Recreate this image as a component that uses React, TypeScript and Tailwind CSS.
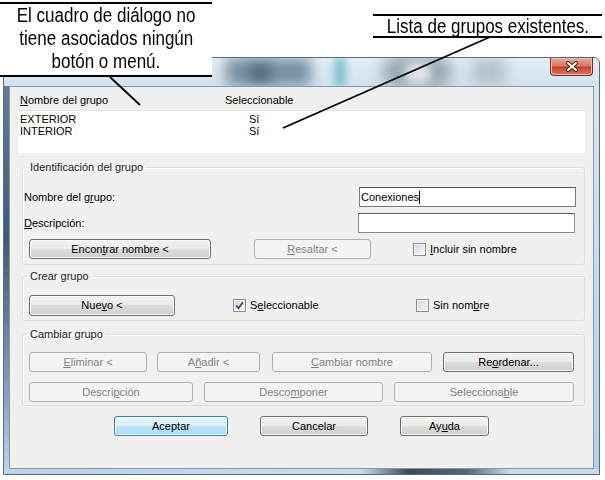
import type { ReactNode } from 'react';

type BtnProps = {
    className: string;
    children: ReactNode;
    disabled?: boolean;
    primary?: boolean;
};

function Btn({ className, children, disabled, primary }: BtnProps) {
    const look = disabled
        ? 'border-[#adb2b5] bg-[#f4f4f4] text-[#838383]'
        : primary
          ? 'border-[#3c7fb1] bg-[linear-gradient(#eaf6fd_0%,#d9f0fc_50%,#bee6fd_50%,#a7d9f5_100%)] text-black shadow-[inset_0_0_0_1px_#f4fbff]'
          : 'border-[#707070] bg-[linear-gradient(#f2f2f2_0%,#ebebeb_50%,#dddddd_50%,#cfcfcf_100%)] text-black shadow-[inset_0_0_0_1px_#fbfbfb]';
    return (
        <button
            type="button"
            className={`flex shrink-0 items-center justify-center rounded-[3px] border text-[11px] leading-none ${look} ${className}`}
        >
            {children}
        </button>
    );
}

function Check({ checked }: { checked?: boolean }) {
    return (
        <span className="flex h-[13px] w-[13px] shrink-0 items-center justify-center border border-[#8e8f8f] bg-[linear-gradient(135deg,#d6d6d6,#f8f8f8)] shadow-[inset_0_0_0_1px_#f4f4f4]">
            {checked && (
                <svg width="9" height="9" viewBox="0 0 9 9">
                    <path d="M1.2 4.6 L3.6 7.2 L7.9 1.2" stroke="#31457d" strokeWidth="1.7" fill="none" />
                </svg>
            )}
        </span>
    );
}

// mnemonic letter
function U({ children }: { children: ReactNode }) {
    return <span className="underline underline-offset-1">{children}</span>;
}

function Group({ title, className, children }: { title: string; className: string; children: ReactNode }) {
    return (
        <fieldset
            className={`ml-[12px] w-[563px] rounded-[3px] border border-[#d5dfe5] shadow-[inset_1px_1px_0_#ffffff] ${className}`}
        >
            <legend className="ml-[4px] px-[3px] text-[11px] leading-[14px] text-[#1e1e1e]">{title}</legend>
            {children}
        </fieldset>
    );
}

export default function App() {
    return (
        <div className="relative h-[480px] w-[605px] overflow-hidden bg-white font-['Liberation_Sans',Arial,sans-serif] text-black">
            {/* Window */}
            <div className="ml-[3px] mt-[57px] flex h-[418px] w-[597px] flex-col overflow-hidden rounded-t-[6px] border border-[#5b6b79] bg-[#c4d8ea]">
                {/* Title bar (blurred glass) */}
                <div className="relative flex h-[28px] shrink-0 justify-end overflow-hidden bg-[linear-gradient(#e4eef6,#d2e2ef)] pr-[6px]">
                    <div className="absolute left-[222px] top-[0px] h-[28px] w-[85px] bg-[#7890a2] blur-[7px]" />
                    <div className="absolute left-[245px] top-[6px] h-[18px] w-[22px] bg-[#566c7c] blur-[6px]" />
                    <div className="absolute left-[330px] top-[0px] h-[28px] w-[12px] bg-[#7cc0d0] blur-[4px]" />
                    <div className="absolute left-[378px] top-[-2px] h-[32px] w-[70px] rounded-full bg-[#95a3ad] blur-[8px]" />
                    <div className="absolute left-[400px] top-[4px] h-[22px] w-[28px] rounded-full bg-[#e0e5ea] blur-[5px]" />
                    <div className="absolute left-[468px] top-[0px] h-[28px] w-[34px] bg-[#b5c2cd] blur-[7px]" />
                    <div className="relative flex h-[18px] w-[43px] items-center justify-center rounded-b-[4px] border border-t-0 border-[#7a2a1e] bg-[linear-gradient(#e8ab9d_0%,#d77a66_45%,#c2432d_55%,#d37a63_100%)] shadow-[inset_0_0_0_1px_#f1b9ad]">
                        <svg width="14" height="11" viewBox="0 0 14 11">
                            <path d="M3 2 L11 9 M11 2 L3 9" stroke="#4a1d16" strokeWidth="4" strokeLinecap="round" />
                            <path d="M3 2 L11 9 M11 2 L3 9" stroke="#ffffff" strokeWidth="2" strokeLinecap="round" />
                        </svg>
                    </div>
                </div>

                <div className="flex flex-1">
                    <div className="w-[5px] bg-[linear-gradient(#5f7f99,#3a5c78_40%,#7fa3c1_80%,#b9d3e8)]" />

                    {/* Client area */}
                    <div className="flex w-[585px] flex-col border border-[#8797a5] bg-[#f0f0f0]">
                        {/* Group list */}
                        <div className="ml-[8px] mt-[3px] w-[567px]">
                            <div className="flex h-[21px] items-center border-b border-[#e3e3e3] text-[11px]">
                                <span className="ml-[2px] w-[205px]">
                                    <U>N</U>ombre del grupo
                                </span>
                                <span>Seleccionable</span>
                            </div>
                            <div className="h-[42px] bg-white pt-[2px] text-[11px] leading-[12px]">
                                <div className="flex">
                                    <span className="ml-[2px] w-[229px]">EXTERIOR</span>
                                    <span>Sí</span>
                                </div>
                                <div className="flex">
                                    <span className="ml-[2px] w-[229px]">INTERIOR</span>
                                    <span>Sí</span>
                                </div>
                            </div>
                        </div>

                        <Group title="Identificación del grupo" className="mt-[7px] pb-[5px]">
                            <div className="mt-[13px] flex h-[20px] items-center text-[11px]">
                                <span className="ml-[1px]">
                                    Nombre del g<U>r</U>upo:
                                </span>
                                <div className="ml-auto mr-[8px] flex h-[20px] w-[217px] items-center border border-[#7a7a7a] border-t-[#555555] bg-white pl-[1px]">
                                    Conexiones
                                    <span className="h-[13px] w-px bg-black" />
                                </div>
                            </div>
                            <div className="mt-[6px] flex h-[20px] items-center text-[11px]">
                                <span className="ml-[1px]">
                                    <U>D</U>escripción:
                                </span>
                                <div className="ml-auto mr-[9px] h-[20px] w-[217px] border border-[#8a8a8a] border-t-[#5c5c5c] bg-white" />
                            </div>
                            <div className="mt-[6px] flex h-[20px] items-center text-[11px]">
                                <Btn className="ml-[6px] h-[20px] w-[182px]">
                                    Encon<U>t</U>rar nombre &lt;
                                </Btn>
                                <Btn className="ml-[43px] h-[20px] w-[117px]" disabled>
                                    <U>R</U>esaltar &lt;
                                </Btn>
                                <span className="ml-[42px]">
                                    <Check />
                                </span>
                                <span className="ml-[4px]">
                                    <U>I</U>ncluir sin nombre
                                </span>
                            </div>
                        </Group>

                        <Group title="Crear grupo" className="mt-[4px] pb-[4px]">
                            <div className="mt-[12px] flex h-[21px] items-center text-[11px]">
                                <Btn className="ml-[6px] h-[21px] w-[146px]">
                                    Nue<U>v</U>o &lt;
                                </Btn>
                                <div className="ml-[58px] flex w-[183px] items-center">
                                    <Check checked />
                                    <span className="ml-[4px]">
                                        S<U>e</U>leccionable
                                    </span>
                                </div>
                                <Check />
                                <span className="ml-[4px]">
                                    Sin nom<U>b</U>re
                                </span>
                            </div>
                        </Group>

                        <Group title="Cambiar grupo" className="mt-[6px] pb-[3px]">
                            <div className="mt-[11px] flex h-[20px] items-center">
                                <Btn className="ml-[6px] h-[20px] w-[118px]" disabled>
                                    <U>E</U>liminar &lt;
                                </Btn>
                                <Btn className="ml-[10px] h-[20px] w-[103px]" disabled>
                                    A<U>ñ</U>adir &lt;
                                </Btn>
                                <Btn className="ml-[12px] h-[20px] w-[160px]" disabled>
                                    <U>C</U>ambiar nombre
                                </Btn>
                                <Btn className="ml-[11px] h-[20px] w-[131px]">
                                    Re<U>o</U>rdenar...
                                </Btn>
                            </div>
                            <div className="mt-[10px] flex h-[20px] items-center">
                                <Btn className="ml-[6px] h-[20px] w-[164px]" disabled>
                                    Descri<U>p</U>ción
                                </Btn>
                                <Btn className="ml-[11px] h-[20px] w-[179px]" disabled>
                                    Desco<U>m</U>poner
                                </Btn>
                                <Btn className="ml-[11px] h-[20px] w-[180px]" disabled>
                                    Selecciona<U>b</U>le
                                </Btn>
                            </div>
                        </Group>

                        <div className="ml-[104px] mt-[10px] flex h-[20px] items-center">
                            <Btn className="h-[20px] w-[114px]" primary>
                                Aceptar
                            </Btn>
                            <Btn className="ml-[32px] h-[20px] w-[108px]">Cancelar</Btn>
                            <Btn className="ml-[32px] h-[20px] w-[89px]">
                                Ay<U>u</U>da
                            </Btn>
                        </div>
                    </div>

                    <div className="w-[5px] bg-[linear-gradient(#d6e6f3,#b5cfe5)]" />
                </div>
                <div className="h-[5px] shrink-0 bg-[linear-gradient(90deg,#b9d3e8_0%,#c8dcee_60%,#3d4a55_68%,#586876_78%,#c8dcee_85%,#c8dcee_100%)]" />
            </div>

            {/* Callout: left */}
            <div className="absolute left-0 top-[2px] flex h-[75px] w-[212px] flex-col items-center border-y-2 border-black bg-white text-[20px] leading-[23px]">
                <span className="inline-block scale-x-[0.85] whitespace-nowrap">El cuadro de diálogo no</span>
                <span className="inline-block scale-x-[0.85] whitespace-nowrap">tiene asociados ningún</span>
                <span className="inline-block scale-x-[0.85] whitespace-nowrap">botón o menú.</span>
            </div>

            {/* Callout: right */}
            <div className="absolute left-[373px] top-[14px] flex h-[24px] w-[229px] items-center justify-center border-y-2 border-black bg-white text-[20px] leading-none">
                <span className="inline-block scale-x-[0.85] whitespace-nowrap">Lista de grupos existentes.</span>
            </div>

            {/* Leader lines */}
            <svg className="pointer-events-none absolute left-0 top-0" width="605" height="480">
                <line x1="110" y1="77" x2="140" y2="105" stroke="#000" strokeWidth="1.8" />
                <line x1="490" y1="37" x2="283" y2="128" stroke="#000" strokeWidth="1.8" />
            </svg>
        </div>
    );
}
